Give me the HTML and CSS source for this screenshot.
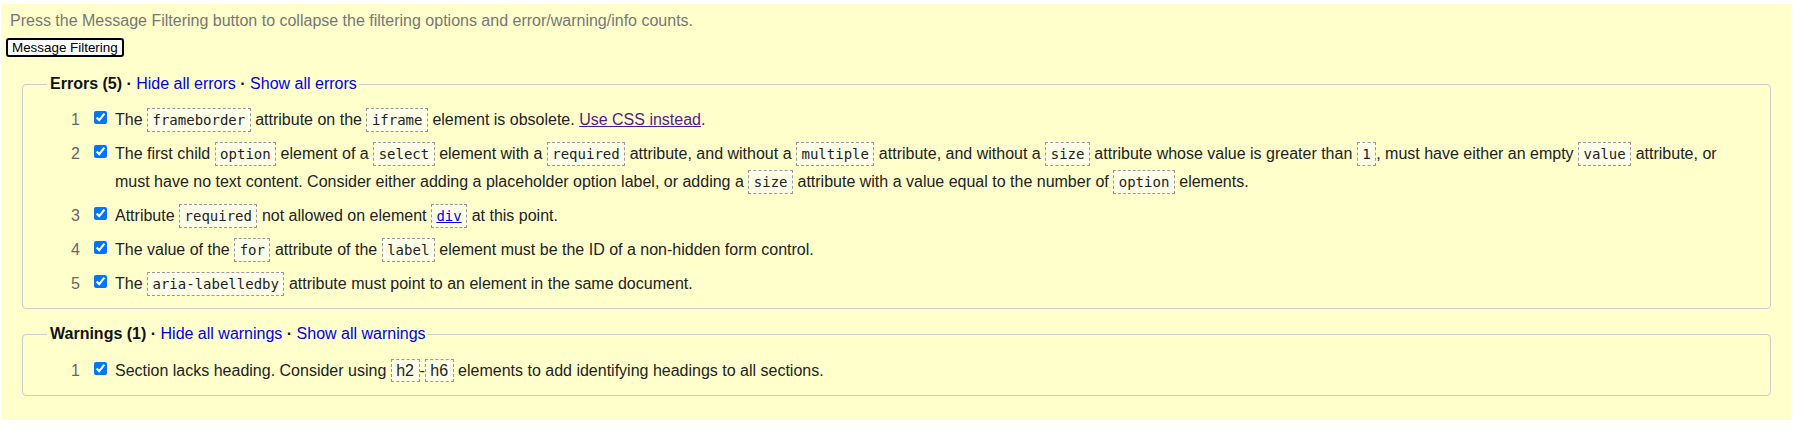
FILE: index.html
```html
<!DOCTYPE html>
<html lang="en">
<head>
<meta charset="utf-8">
<title>Message Filtering</title>
<link rel="stylesheet" href="styles.css">
</head>
<body>
<section class="panel">
  <p class="intro">Press the Message Filtering button to collapse the filtering options and error/warning/info counts.</p>
  <button class="toggle" type="button">Message Filtering</button>

  <fieldset class="group group-errors">
    <legend>Errors (5) · <a href="#">Hide all errors</a> · <a href="#">Show all errors</a></legend>
    <ol class="msgs">
      <li class="msg"><span class="num">1</span><input class="chk" type="checkbox" checked><span class="txt">The <code>frameborder</code> attribute on the <code>iframe</code> element is obsolete. <a class="visited" href="#">Use CSS instead</a>.</span></li>
      <li class="msg"><span class="num">2</span><input class="chk" type="checkbox" checked><span class="txt">The first child <code>option</code> element of a <code>select</code> element with a <code>required</code> attribute, and without a <code>multiple</code> attribute, and without a <code>size</code> attribute whose value is greater than <code>1</code>, must have either an empty <code>value</code> <span>attribute, or </span><span>must have no text content. Consider either adding a placeholder option label, or adding a </span><code>size</code> attribute with a value equal to the number of <code>option</code> elements.</span></li>
      <li class="msg"><span class="num">3</span><input class="chk" type="checkbox" checked><span class="txt">Attribute <code>required</code> not allowed on element <code><a class="link" href="#">div</a></code> at this point.</span></li>
      <li class="msg"><span class="num">4</span><input class="chk" type="checkbox" checked><span class="txt">The value of the <code>for</code> attribute of the <code>label</code> element must be the ID of a non-hidden form control.</span></li>
      <li class="msg"><span class="num">5</span><input class="chk" type="checkbox" checked><span class="txt">The <code>aria-labelledby</code> attribute must point to an element in the same document.</span></li>
    </ol>
  </fieldset>

  <fieldset class="group group-warnings">
    <legend>Warnings (1) · <a href="#">Hide all warnings</a> · <a href="#">Show all warnings</a></legend>
    <ol class="msgs">
      <li class="msg"><span class="num">1</span><input class="chk" type="checkbox" checked><span class="txt">Section lacks heading. Consider using <code class="plain">h2</code>-<code class="plain">h6</code> elements to add identifying headings to all sections.</span></li>
    </ol>
  </fieldset>
</section>
</body>
</html>
```

FILE: styles.css
```css
body {
  margin: 4px 9px 0 1px;
  font-family: "Liberation Sans", Arial, sans-serif;
  font-size: 16px;
  color: #222;
  background: #fff;
}

.panel {
  background: #ffffcc;
  padding: 8px 5px 24px 5px;
}

.intro {
  margin: 0 0 7.6px 4px;
  color: #777;
  line-height: 18.4px;
}

.toggle {
  display: block;
  margin: 0;
  padding: 0 4px;
  font-family: "Liberation Sans", Arial, sans-serif;
  font-size: 13.4px;
  line-height: 15px;
  color: #000;
  background: #fff;
  border: 2px solid #000;
  border-radius: 3px;
}

.group {
  margin: 17.8px 15px 0 16px;
  padding: 13px 24px 10px 24px;
  border: 1px solid #ccc;
  border-radius: 4px;
  min-width: 0;
}

.group-warnings {
  margin-top: 16px;
}

.group legend {
  padding: 0 2px 0 3px;
  font-weight: bold;
  line-height: 18.4px;
  color: #111;
}

.group legend a {
  font-weight: normal;
  color: #0000ee;
  text-decoration: none;
}

.msgs {
  list-style: none;
  margin: 0;
  padding: 0;
  display: flex;
  flex-direction: column;
  gap: 6px;
}

.msg {
  display: flex;
  align-items: flex-start;
  line-height: 28px;
}

.num {
  flex: 0 0 33px;
  text-align: right;
  color: #666;
}

.chk {
  flex: 0 0 13px;
  width: 13px;
  height: 13px;
  margin: 5px 8px 0 14px;
}

.txt {
  flex: 1 1 auto;
  min-width: 0;
}

code {
  font-family: "DejaVu Sans Mono", "Liberation Mono", monospace;
  font-size: 14px;
  padding: 3px 4.5px;
  border: 1px dashed #999;
  background: #ffffe8;
}

code.plain {
  font-family: "Liberation Sans", Arial, sans-serif;
  font-size: 16px;
  padding: 2px 4.5px;
}

.visited {
  color: #551a8b;
  text-decoration: underline;
}

.link {
  color: #0000ee;
  text-decoration: underline;
}
```
